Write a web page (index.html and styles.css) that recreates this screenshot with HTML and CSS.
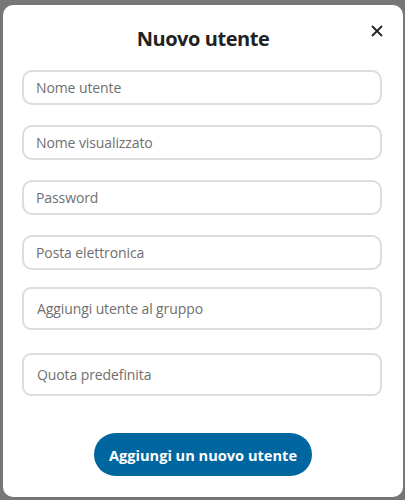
FILE: index.html
```html
<!DOCTYPE html>
<html lang="it">
<head>
<meta charset="utf-8">
<title>Nuovo utente</title>
<link rel="stylesheet" href="styles.css">
</head>
<body>
<div class="modal">
  <button class="close" aria-label="Chiudi">
    <svg width="12" height="12" viewBox="0 0 12 12"><path d="M1 1 L11 11 M11 1 L1 11" stroke="#222" stroke-width="1.8" fill="none"/></svg>
  </button>
  <h2 class="title">Nuovo utente</h2>
  <form class="form">
    <input class="field" type="text" placeholder="Nome utente">
    <input class="field" type="text" placeholder="Nome visualizzato">
    <input class="field" type="password" placeholder="Password">
    <input class="field field-mail" type="email" placeholder="Posta elettronica">
    <input class="field field-lg field-group" type="text" placeholder="Aggiungi utente al gruppo">
    <input class="field field-lg field-quota" type="text" placeholder="Quota predefinita">
    <button class="submit" type="button">Aggiungi un nuovo utente</button>
  </form>
</div>
</body>
</html>
```
FILE: styles.css
```css
html, body {
  margin: 0;
  padding: 0;
}
body {
  background: #777777;
  width: 405px;
  height: 500px;
  padding: 5px 2px 3px 3px;
  box-sizing: border-box;
  font-family: "Open Sans", "Noto Sans", sans-serif;
}
.modal {
  position: relative;
  width: 400px;
  height: 492px;
  background: #ffffff;
  border-radius: 10px;
  box-sizing: border-box;
  padding: 22px 0 0 0;
}
.close {
  position: absolute;
  top: 20px;
  right: 20px;
  width: 12px;
  height: 12px;
  padding: 0;
  border: 0;
  background: transparent;
  display: flex;
}
.title {
  margin: 0;
  text-align: center;
  font-size: 20px;
  line-height: 24px;
  font-weight: 700;
  color: #222222;
  letter-spacing: -0.45px;
}
.form {
  display: flex;
  flex-direction: column;
  align-items: flex-start;
  padding-left: 19px;
  margin-top: 19px;
}
.field {
  width: 360px;
  height: 35px;
  box-sizing: border-box;
  border: 2px solid #dcdcdc;
  border-radius: 10px;
  padding: 0 12px;
  margin: 0 0 20px 0;
  font-family: "Open Sans", "Noto Sans", sans-serif;
  font-size: 14px;
  letter-spacing: -0.1px;
  color: #333;
  background: #fff;
  outline: none;
}
.field::placeholder {
  color: #6f6f6f;
}
.field-lg {
  height: 43px;
  padding-left: 13px;
  border-radius: 9px;
}
.field-mail {
  margin-bottom: 17px;
}
.field-group {
  margin-bottom: 23px;
}
.field-quota {
  margin-bottom: 37px;
}
.submit {
  align-self: center;
  margin-left: -19px;
  width: 218px;
  height: 43px;
  border: 0;
  border-radius: 22px;
  background: #0066a0;
  color: #ffffff;
  font-family: "Open Sans", "Noto Sans", sans-serif;
  font-weight: 700;
  font-size: 14.6px;
  letter-spacing: 0;
  padding: 0;
}
```
